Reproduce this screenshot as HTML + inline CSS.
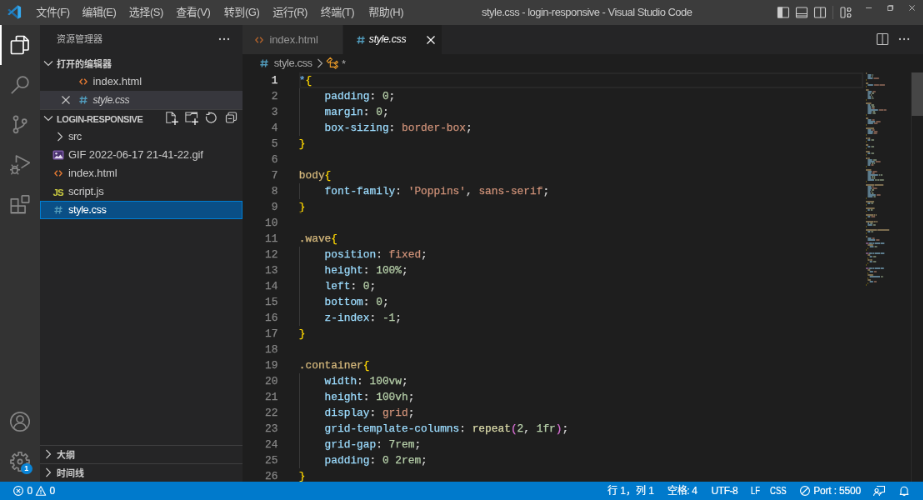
<!DOCTYPE html>
<html lang="zh-CN">
<head>
<meta charset="utf-8">
<title>style.css - login-responsive - Visual Studio Code</title>
<style>
html,body{margin:0;padding:0;background:#1e1e1e;overflow:hidden;}
body{width:923px;height:500px;position:relative;}
#app{position:absolute;left:0;top:0;width:1107.6px;height:600px;transform:scale(0.833333);transform-origin:0 0;will-change:transform;
 font-family:"Liberation Sans","Noto Sans CJK SC",sans-serif;font-size:13px;color:#cccccc;overflow:hidden;background:#1e1e1e;}
#app *{box-sizing:border-box;}
.abs{position:absolute;}
/* title bar */
#title{position:absolute;left:0;top:0;width:100%;height:30px;background:#3c3c3c;color:#cccccc;}
#title .menu{position:absolute;top:0;height:30px;line-height:30px;font-size:13px;white-space:nowrap;letter-spacing:-0.45px;}
#title .wtitle{position:absolute;top:0;height:30px;line-height:30px;font-size:12.6px;white-space:nowrap;color:#cccccc;}
/* activity bar */
#activity{position:absolute;left:0;top:30px;width:48px;height:548px;background:#333333;}
#activity .ic{position:absolute;left:0;width:48px;height:48px;}
#activity .ic svg{position:absolute;left:12px;top:12px;width:24px;height:24px;}
/* sidebar */
#side{position:absolute;left:48px;top:30px;width:243px;height:548px;background:#252526;}
#side .stitle{position:absolute;left:20px;top:0;height:35px;line-height:35px;font-size:11px;color:#bbbbbb;}
.phead{position:absolute;left:0;width:243px;height:22px;line-height:22px;font-size:11px;font-weight:bold;color:#cccccc;}
.phead .lbl{position:absolute;left:20px;top:0.500px;white-space:nowrap;}
.row{position:absolute;left:0;width:243px;height:22px;line-height:22px;font-size:13px;color:#cccccc;white-space:nowrap;}
.row .lbl{position:absolute;top:0;}
/* editor */
#tabs{position:absolute;left:291px;top:30px;width:817px;height:35px;background:#252526;}
.tab{position:absolute;top:0;height:35px;line-height:35px;font-size:13px;white-space:nowrap;}
#crumbs{position:absolute;left:291px;top:65px;width:817px;height:22px;line-height:22px;background:#1e1e1e;font-size:13px;color:#a9a9a9;}
#code{position:absolute;left:291px;top:87px;width:817px;height:491px;background:#1e1e1e;font-family:"Liberation Mono",monospace;font-size:12.83px;-webkit-text-stroke:0.25px;}
.ln{position:absolute;left:0;width:42.5px;text-align:right;height:19px;line-height:19px;color:#858585;}
.cl{position:absolute;left:67.8px;height:19px;line-height:19px;white-space:pre;color:#d4d4d4;}
.p{color:#9cdcfe}.n{color:#b5cea8}.s{color:#ce9178}.y{color:#ffd700}.t{color:#d7ba7d}.f{color:#dcdcaa}.m{color:#da70d6}
/* status */
#status{position:absolute;left:0;top:578px;width:100%;height:22px;background:#007acc;color:#ffffff;font-size:12px;line-height:23px;-webkit-text-stroke:0.2px;}
#status .it{position:absolute;top:0;white-space:nowrap;}
</style>
</head>
<body>
<div id="app">
 <div id="title">
  <svg class="abs" style="left:9.400px;top:6.200px;width:16.600px;height:17.200px" viewBox="0 0 100 100" preserveAspectRatio="none">
   <path d="M74 98L74 78L13 28L3 33L3 37Z" fill="#1a6fae"/>
   <path d="M74 2L74 22L13 72L3 67L3 63Z" fill="#2488cc"/>
   <path d="M74 2L97 14V86L74 98Z" fill="#34a9f0"/>
  </svg>
  <div class="menu" style="left:43.2px">文件(F)</div>
  <div class="menu" style="left:98.4px">编辑(E)</div>
  <div class="menu" style="left:154.8px">选择(S)</div>
  <div class="menu" style="left:211.2px">查看(V)</div>
  <div class="menu" style="left:268.8px">转到(G)</div>
  <div class="menu" style="left:327.200px">运行(R)</div>
  <div class="menu" style="left:384.800px">终端(T)</div>
  <div class="menu" style="left:442.300px">帮助(H)</div>
  <div class="wtitle" style="left:578px;font-size:13px;letter-spacing:-0.52px">style.css - login-responsive - Visual Studio Code</div>
  <svg class="abs" style="left:932px;top:7px;width:16px;height:16px" viewBox="0 0 16 16" fill="none" stroke="#cccccc" stroke-width="1.1"><rect x="1.5" y="2" width="13" height="12" rx="1"/><path d="M1.5 2h5v12h-5z" fill="#cccccc"/></svg>
  <svg class="abs" style="left:954px;top:7px;width:16px;height:16px" viewBox="0 0 16 16" fill="none" stroke="#cccccc" stroke-width="1.1"><rect x="1.5" y="2" width="13" height="12" rx="1"/><path d="M1.5 9.5h13M1.5 12h13"/></svg>
  <svg class="abs" style="left:976px;top:7px;width:16px;height:16px" viewBox="0 0 16 16" fill="none" stroke="#cccccc" stroke-width="1.1"><rect x="1.5" y="2" width="13" height="12" rx="1"/><path d="M8.800 2v12"/></svg>
  <div class="abs" style="left:999px;top:7px;width:1px;height:16px;background:#5a5a5a"></div>
  <svg class="abs" style="left:1007px;top:7px;width:16px;height:16px" viewBox="0 0 16 16" fill="none" stroke="#cccccc" stroke-width="1.1"><rect x="2" y="2" width="5" height="12" rx="1"/><circle cx="12" cy="4.5" r="2"/><circle cx="12" cy="11.5" r="2"/></svg>
  <div class="abs" style="left:1038.500px;top:8.500px;width:7px;height:1px;background:#b0b0b0"></div>
  <svg class="abs" style="left:1064.500px;top:5.800px;width:7px;height:7px" viewBox="0 0 8 8" fill="none" stroke="#c0c0c0" stroke-width="1"><rect x="0.5" y="1.5" width="6" height="6"/><path d="M2 1.5V0.5h5.5V6H6.5"/></svg>
  <svg class="abs" style="left:1091px;top:5.800px;width:7px;height:7px" viewBox="0 0 8 8" fill="none" stroke="#d0d0d0" stroke-width="1"><path d="M0.5 0.5l7 7M7.5 0.5l-7 7"/></svg>
 </div>
 <div id="activity">
  <div class="abs" style="left:0;top:0;width:2px;height:48px;background:#ffffff"></div>
  <div class="ic" style="top:0"><svg viewBox="0 0 24 24" fill="none" stroke="#ffffff" stroke-width="1.700" stroke-linejoin="round"><path d="M7.500 7V2.500a1 1 0 0 1 1-1h8.500l5 5v10.500a1 1 0 0 1-1 1H16"/><path d="M16.800 1.500v5.200h5.200"/><rect x="1.500" y="7" width="14.500" height="15.500" rx="1.200"/></svg></div>
  <div class="ic" style="top:48px"><svg viewBox="0 0 24 24" fill="none" stroke="#858585" stroke-width="1.700"><circle cx="15.300" cy="8.700" r="6.500"/><path d="M10.700 13.300L1.800 22.200"/></svg></div>
  <div class="ic" style="top:96px"><svg viewBox="0 0 24 24" fill="none" stroke="#858585" stroke-width="1.700"><circle cx="7" cy="3.800" r="2.500"/><circle cx="7" cy="18.800" r="2.500"/><circle cx="17.200" cy="7.600" r="2.500"/><path d="M7 6.300v10M17.200 10.100c0 4-4.500 4.200-8.200 6.500"/></svg></div>
  <div class="ic" style="top:144px"><svg viewBox="0 0 24 24" fill="none" stroke="#858585" stroke-width="1.700" stroke-linejoin="round"><path d="M7.500 9V1l16 8.300-10 6.300"/><ellipse cx="5.800" cy="17.800" rx="3.200" ry="4.200"/><path d="M3.600 13.800l-1.800-2.200M8 13.800l1.800-2.200M2.600 17.800H-0.500M9 17.800h3.100M3.400 21l-2 2.200M8.200 21l2 2.200M2.800 16.200h6" stroke-width="1.400"/></svg></div>
  <div class="ic" style="top:192px"><svg viewBox="0 0 24 24" fill="none" stroke="#858585" stroke-width="1.700" stroke-linejoin="round"><path d="M1.300 4.800h8.400v8.400h8.400v8.400H1.300z"/><path d="M1.300 13.200h8.400v8.400"/><rect x="14.300" y="0.800" width="8.400" height="8.400" rx="0.800"/></svg></div>
  <div class="ic" style="top:452px"><svg viewBox="0 0 24 24" fill="none" stroke="#858585" stroke-width="1.700" style="overflow:visible"><circle cx="12" cy="12" r="11.200"/><circle cx="12" cy="9" r="4"/><path d="M4.300 20c1.200-4.300 4.200-6 7.700-6s6.500 1.700 7.700 6"/></svg></div>
  <div class="ic" style="top:500px"><svg viewBox="0 0 24 24" fill="none" stroke="#858585" stroke-width="1.700" stroke-linejoin="round" style="overflow:visible"><circle cx="12" cy="12" r="2.600"/><path d="M10.07 0.97L13.93 0.97L13.91 4.03L16.28 5.01L18.44 2.84L21.16 5.56L18.99 7.72L19.97 10.09L23.03 10.07L23.03 13.93L19.97 13.91L18.99 16.28L21.16 18.44L18.44 21.16L16.28 18.99L13.91 19.97L13.93 23.03L10.07 23.03L10.09 19.97L7.72 18.99L5.56 21.16L2.84 18.44L5.01 16.28L4.03 13.91L0.97 13.93L0.97 10.07L4.03 10.09L5.01 7.72L2.84 5.56L5.56 2.84L7.72 5.01L10.09 4.03Z"/></svg>
   <div class="abs" style="left:25px;top:25.500px;width:13.500px;height:13.500px;border-radius:7px;background:#0a84d6;color:#fff;font-size:9px;font-weight:bold;line-height:13.500px;text-align:center">1</div></div>
 </div>
 <div id="side">
  <div class="stitle">资源管理器</div>
  <svg class="abs" style="left:212.700px;top:9px;width:16px;height:16px" viewBox="0 0 16 16" fill="#cccccc"><circle cx="3" cy="8" r="1.150"/><circle cx="8" cy="8" r="1.150"/><circle cx="13" cy="8" r="1.150"/></svg>
  <div class="phead" style="top:35px"><svg class="abs" style="left:2px;top:3px;width:16px;height:16px" viewBox="0 0 16 16" fill="none" stroke="#cccccc" stroke-width="1.1"><path d="M3 5.500l5 5 5-5"/></svg><span class="lbl">打开的编辑器</span></div>
  <div class="row" style="top:57px"><svg class="abs" style="left:45px;top:3px;width:14px;height:16px" viewBox="0 0 14 16" fill="none" stroke="#e37933" stroke-width="1.500"><path d="M5.800 4.700L2.900 8l2.900 3.300M8.200 4.700L11.100 8l-2.900 3.300" stroke-width="1.400"/></svg><span class="lbl" style="left:63.500px;letter-spacing:-0.06px">index.html</span></div>
  <div class="row" style="top:79px;background:#37373d">
   <svg class="abs" style="left:23px;top:3px;width:16px;height:16px" viewBox="0 0 16 16" fill="none" stroke="#cccccc" stroke-width="1.100"><path d="M3.500 3.500l9 9M12.500 3.500l-9 9"/></svg>
   <svg class="abs" style="left:45px;top:3px;width:14px;height:16px" viewBox="0 0 14 16" fill="none" stroke="#519aba" stroke-width="1.500"><path d="M5.500 3.500L4.300 12.500M9.700 3.500L8.500 12.500M2.700 6.300h9M2.300 9.700h9" stroke-width="1.400"/></svg><span class="lbl" style="left:63.500px;font-style:italic;font-size:12.300px;letter-spacing:-0.380px">style.css</span></div>
  <div class="abs" style="left:0;top:101px;width:243px;height:1px;background:#3f3f40"></div>
  <div class="phead" style="top:101px"><svg class="abs" style="left:2px;top:3px;width:16px;height:16px" viewBox="0 0 16 16" fill="none" stroke="#cccccc" stroke-width="1.1"><path d="M3 5.500l5 5 5-5"/></svg><span class="lbl" style="letter-spacing:-0.41px">LOGIN-RESPONSIVE</span>
   <svg class="abs" style="left:150px;top:3px;width:16px;height:16px" viewBox="0 0 16 16" fill="none" stroke="#c5c5c5" stroke-width="1.100"><path d="M7.500 13.200H1.800V0.800h6.700l3.700 3.700v3M8.300 0.800v3.900h3.900"/><path d="M12 8.300v7.800M8.100 12.200h7.800" stroke="#e8e8e8" stroke-width="1.400"/></svg>
   <svg class="abs" style="left:174px;top:3px;width:16px;height:16px" viewBox="0 0 16 16" fill="none" stroke="#c5c5c5" stroke-width="1.100"><path d="M7.500 12H0.900V1h13.600v6.800M0.900 4h5.600l1.300-1.600h6.500"/><path d="M7.800 1h6.700v2H7.800z" fill="#c5c5c5" stroke="none"/><path d="M12 8.300v7.800M8.100 12.200h7.800" stroke="#e8e8e8" stroke-width="1.400"/></svg>
   <svg class="abs" style="left:198px;top:3px;width:16px;height:16px" viewBox="0 0 16 16" fill="none" stroke="#c5c5c5" stroke-width="1.100"><path d="M4.300 2.400A5.800 5.800 0 1 1 1.800 5.600" stroke-width="1.300"/><path d="M4.800 0.200v3.200H1.400" stroke-width="1.300"/></svg>
   <svg class="abs" style="left:222px;top:3px;width:16px;height:16px" viewBox="0 0 16 16" fill="none" stroke="#c5c5c5" stroke-width="1.100"><rect x="1.500" y="4" width="9" height="9" rx="1.500" stroke-width="1.200"/><path d="M4 4V2.500a1.500 1.500 0 0 1 1.500-1.500h6.500a1.500 1.500 0 0 1 1.500 1.500v6.500a1.500 1.500 0 0 1-1.500 1.500h-1.500M3.700 8.500h4.600" stroke-width="1.200"/></svg>
  </div>
  <div class="row" style="top:123px"><svg class="abs" style="left:16px;top:3px;width:16px;height:16px" viewBox="0 0 16 16" fill="none" stroke="#cccccc" stroke-width="1.1"><path d="M5.500 3l5 5-5 5"/></svg><span class="lbl" style="left:34px;letter-spacing:-0.6px">src</span></div>
  <div class="row" style="top:145px">
   <svg class="abs" style="left:15px;top:4px;width:14px;height:14px" viewBox="0 0 14 14"><rect x="0.500" y="1.500" width="13" height="11" rx="1.500" fill="#7d5aa8"/><rect x="2" y="3" width="10" height="8" fill="#49326e"/><circle cx="4.500" cy="5.300" r="1.200" fill="#e6dcf0"/><path d="M2 11l3.200-3.200 1.800 1.800 2.500-3 2.500 3.400v1z" fill="#e6dcf0"/></svg>
   <span class="lbl" style="left:34px;letter-spacing:-0.107px">GIF 2022-06-17 21-41-22.gif</span></div>
  <div class="row" style="top:167px"><svg class="abs" style="left:15px;top:3px;width:14px;height:16px" viewBox="0 0 14 16" fill="none" stroke="#e37933" stroke-width="1.500"><path d="M5.800 4.700L2.900 8l2.900 3.300M8.200 4.700L11.100 8l-2.900 3.300" stroke-width="1.400"/></svg><span class="lbl" style="left:34px;letter-spacing:-0.06px">index.html</span></div>
  <div class="row" style="top:189px"><span class="abs" style="left:15.500px;top:0.500px;font-size:11.500px;font-weight:bold;color:#cbcb41;letter-spacing:-1px">JS</span><span class="lbl" style="left:34px;letter-spacing:-0.17px">script.js</span></div>
  <div class="row" style="top:210.500px;height:22.500px;background:#0a4f86;border:1px solid #007fd4;color:#ffffff"><svg class="abs" style="left:14px;top:2px;width:14px;height:16px" viewBox="0 0 14 16" fill="none" stroke="#519aba" stroke-width="1.500"><path d="M5.500 3.500L4.300 12.500M9.700 3.500L8.500 12.500M2.700 6.300h9M2.300 9.700h9" stroke-width="1.400"/></svg><span class="lbl" style="left:33px;top:-1px;letter-spacing:-0.49px">style.css</span></div>
  <div class="abs" style="left:0;top:504px;width:243px;height:1px;background:#3f3f40"></div>
  <div class="phead" style="top:504px"><svg class="abs" style="left:2px;top:3px;width:16px;height:16px" viewBox="0 0 16 16" fill="none" stroke="#cccccc" stroke-width="1.1"><path d="M5.500 3l5 5-5 5"/></svg><span class="lbl">大纲</span></div>
  <div class="abs" style="left:0;top:526px;width:243px;height:1px;background:#3f3f40"></div>
  <div class="phead" style="top:526px"><svg class="abs" style="left:2px;top:3px;width:16px;height:16px" viewBox="0 0 16 16" fill="none" stroke="#cccccc" stroke-width="1.1"><path d="M5.500 3l5 5-5 5"/></svg><span class="lbl">时间线</span></div>
 </div>
 <div id="tabs">
  <div class="tab" style="left:0;width:120px;background:#2d2d2d;color:#969696">
   <svg class="abs" style="left:13px;top:9.500px;width:14px;height:16px" viewBox="0 0 14 16" fill="none" stroke="#b0622c" stroke-width="1.500"><path d="M5.800 4.700L2.900 8l2.900 3.300M8.200 4.700L11.100 8l-2.900 3.300" stroke-width="1.400"/></svg>
   <span class="abs" style="left:32.400px;top:0;letter-spacing:-0.07px">index.html</span></div>
  <div class="tab" style="left:121px;width:117.500px;background:#1e1e1e;color:#ffffff">
   <svg class="abs" style="left:14px;top:9.500px;width:14px;height:16px" viewBox="0 0 14 16" fill="none" stroke="#519aba" stroke-width="1.500"><path d="M5.500 3.500L4.300 12.500M9.700 3.500L8.500 12.500M2.700 6.300h9M2.300 9.700h9" stroke-width="1.400"/></svg>
   <span class="abs" style="left:30.800px;top:0;font-style:italic;font-size:12.300px;letter-spacing:-0.300px">style.css</span>
   <svg class="abs" style="left:97px;top:9.500px;width:16px;height:16px" viewBox="0 0 16 16" fill="none" stroke="#ffffff" stroke-width="1.200"><path d="M3.500 3.500l9 9M12.500 3.500l-9 9"/></svg></div>
  <svg class="abs" style="left:760px;top:9px;width:16px;height:16px" viewBox="0 0 16 16" fill="none" stroke="#c5c5c5" stroke-width="1.100"><rect x="1.500" y="1.500" width="13" height="13" rx="1"/><path d="M8 1.500v13"/></svg>
  <svg class="abs" style="left:785.9px;top:8.8px;width:16px;height:16px" viewBox="0 0 16 16" fill="#c5c5c5"><circle cx="3" cy="8" r="1.150"/><circle cx="8" cy="8" r="1.150"/><circle cx="13" cy="8" r="1.150"/></svg>
 </div>
 <div id="crumbs">
  <svg class="abs" style="left:19px;top:3px;width:14px;height:16px" viewBox="0 0 14 16" fill="none" stroke="#519aba" stroke-width="1.500"><path d="M5.500 3.500L4.300 12.500M9.700 3.500L8.500 12.500M2.700 6.300h9M2.300 9.700h9" stroke-width="1.400"/></svg>
  <span class="abs" style="left:37.800px;top:0;letter-spacing:-0.44px">style.css</span>
  <svg class="abs" style="left:85px;top:3px;width:16px;height:16px" viewBox="0 0 16 16" fill="none" stroke="#a9a9a9" stroke-width="1.100"><path d="M5.500 3l5 5-5 5"/></svg>
  <svg class="abs" style="left:100px;top:3px;width:16px;height:16px" viewBox="0 0 16 16" fill="none" stroke="#ee9d28" stroke-width="1.100"><path d="M5.350 1.300L7.400 3.350L3.350 7.400L1.300 5.350ZM13 5.400L14.300 6.700L11.700 9.300L10.400 8ZM13 10.400L14.300 11.700L11.700 14.300L10.400 13ZM5.350 6v6.350h5.300M5.350 7.300h5.300"/></svg>
  <span class="abs" style="left:119px;top:1px">*</span>
 </div>
 <div id="code">
  <div class="abs" style="left:67.800px;top:0;width:677.500px;height:19px;border:2px solid #282828"></div>
  <div class="abs" style="left:67.800px;top:19px;width:1px;height:57px;background:#393939"></div>
  <div class="abs" style="left:67.800px;top:133px;width:1px;height:19px;background:#393939"></div>
  <div class="abs" style="left:67.800px;top:209px;width:1px;height:95px;background:#393939"></div>
  <div class="abs" style="left:67.800px;top:361px;width:1px;height:114px;background:#393939"></div>
  <div class="ln" style="top:0px"><span style="color:#e4e4e4">1</span></div><div class="cl" style="top:0px"><span style="color:#6cb0e8">*</span><span class="y">{</span></div>
  <div class="ln" style="top:19px"><span>2</span></div><div class="cl" style="top:19px">    <span class="p">padding</span>: <span class="n">0</span>;</div>
  <div class="ln" style="top:38px"><span>3</span></div><div class="cl" style="top:38px">    <span class="p">margin</span>: <span class="n">0</span>;</div>
  <div class="ln" style="top:57px"><span>4</span></div><div class="cl" style="top:57px">    <span class="p">box-sizing</span>: <span class="s">border-box</span>;</div>
  <div class="ln" style="top:76px"><span>5</span></div><div class="cl" style="top:76px"><span class="y">}</span></div>
  <div class="ln" style="top:95px"><span>6</span></div><div class="cl" style="top:95px"></div>
  <div class="ln" style="top:114px"><span>7</span></div><div class="cl" style="top:114px"><span class="t">body</span><span class="y">{</span></div>
  <div class="ln" style="top:133px"><span>8</span></div><div class="cl" style="top:133px">    <span class="p">font-family</span>: <span class="s">'Poppins'</span>, <span class="s">sans-serif</span>;</div>
  <div class="ln" style="top:152px"><span>9</span></div><div class="cl" style="top:152px"><span class="y">}</span></div>
  <div class="ln" style="top:171px"><span>10</span></div><div class="cl" style="top:171px"></div>
  <div class="ln" style="top:190px"><span>11</span></div><div class="cl" style="top:190px"><span class="t">.wave</span><span class="y">{</span></div>
  <div class="ln" style="top:209px"><span>12</span></div><div class="cl" style="top:209px">    <span class="p">position</span>: <span class="s">fixed</span>;</div>
  <div class="ln" style="top:228px"><span>13</span></div><div class="cl" style="top:228px">    <span class="p">height</span>: <span class="n">100%</span>;</div>
  <div class="ln" style="top:247px"><span>14</span></div><div class="cl" style="top:247px">    <span class="p">left</span>: <span class="n">0</span>;</div>
  <div class="ln" style="top:266px"><span>15</span></div><div class="cl" style="top:266px">    <span class="p">bottom</span>: <span class="n">0</span>;</div>
  <div class="ln" style="top:285px"><span>16</span></div><div class="cl" style="top:285px">    <span class="p">z-index</span>: <span class="n">-1</span>;</div>
  <div class="ln" style="top:304px"><span>17</span></div><div class="cl" style="top:304px"><span class="y">}</span></div>
  <div class="ln" style="top:323px"><span>18</span></div><div class="cl" style="top:323px"></div>
  <div class="ln" style="top:342px"><span>19</span></div><div class="cl" style="top:342px"><span class="t">.container</span><span class="y">{</span></div>
  <div class="ln" style="top:361px"><span>20</span></div><div class="cl" style="top:361px">    <span class="p">width</span>: <span class="n">100vw</span>;</div>
  <div class="ln" style="top:380px"><span>21</span></div><div class="cl" style="top:380px">    <span class="p">height</span>: <span class="n">100vh</span>;</div>
  <div class="ln" style="top:399px"><span>22</span></div><div class="cl" style="top:399px">    <span class="p">display</span>: <span class="s">grid</span>;</div>
  <div class="ln" style="top:418px"><span>23</span></div><div class="cl" style="top:418px">    <span class="p">grid-template-columns</span>: <span class="f">repeat</span><span class="m">(</span><span class="n">2</span>, <span class="n">1fr</span><span class="m">)</span>;</div>
  <div class="ln" style="top:437px"><span>24</span></div><div class="cl" style="top:437px">    <span class="p">grid-gap</span>: <span class="n">7rem</span>;</div>
  <div class="ln" style="top:456px"><span>25</span></div><div class="cl" style="top:456px">    <span class="p">padding</span>: <span class="n">0</span> <span class="n">2rem</span>;</div>
  <div class="ln" style="top:475px"><span>26</span></div><div class="cl" style="top:475px"><span class="y">}</span></div>
  <div class="abs" style="left:801.500px;top:0;width:1px;height:491px;background:#2b2b2b"></div>
  <div class="abs" style="left:802.500px;top:0;width:14.500px;height:51.600px;background:#464646"></div>
  <svg class="abs" style="left:748px;top:0;width:54px;height:256px" viewBox="0 0 92 256" preserveAspectRatio="none" fill-opacity="0.5"><rect x="0" y="0" width="2" height="2" fill="#d7ba7d"/><rect x="4" y="2" width="7" height="2" fill="#9cdcfe"/><rect x="13" y="2" width="2" height="2" fill="#b5cea8"/><rect x="4" y="4" width="6" height="2" fill="#9cdcfe"/><rect x="12" y="4" width="2" height="2" fill="#b5cea8"/><rect x="4" y="6" width="10" height="2" fill="#9cdcfe"/><rect x="16" y="6" width="11" height="2" fill="#ce9178"/><rect x="0" y="8" width="1" height="2" fill="#ffd700"/><rect x="0" y="12" width="5" height="2" fill="#d7ba7d"/><rect x="4" y="14" width="11" height="2" fill="#9cdcfe"/><rect x="17" y="14" width="10" height="2" fill="#ce9178"/><rect x="28" y="14" width="11" height="2" fill="#ce9178"/><rect x="0" y="16" width="1" height="2" fill="#ffd700"/><rect x="0" y="20" width="6" height="2" fill="#d7ba7d"/><rect x="4" y="22" width="8" height="2" fill="#9cdcfe"/><rect x="14" y="22" width="6" height="2" fill="#ce9178"/><rect x="4" y="24" width="6" height="2" fill="#9cdcfe"/><rect x="12" y="24" width="5" height="2" fill="#b5cea8"/><rect x="4" y="26" width="4" height="2" fill="#9cdcfe"/><rect x="10" y="26" width="2" height="2" fill="#b5cea8"/><rect x="4" y="28" width="6" height="2" fill="#9cdcfe"/><rect x="12" y="28" width="2" height="2" fill="#b5cea8"/><rect x="4" y="30" width="7" height="2" fill="#9cdcfe"/><rect x="13" y="30" width="3" height="2" fill="#b5cea8"/><rect x="0" y="32" width="1" height="2" fill="#ffd700"/><rect x="0" y="36" width="11" height="2" fill="#d7ba7d"/><rect x="4" y="38" width="5" height="2" fill="#9cdcfe"/><rect x="11" y="38" width="6" height="2" fill="#b5cea8"/><rect x="4" y="40" width="6" height="2" fill="#9cdcfe"/><rect x="12" y="40" width="6" height="2" fill="#b5cea8"/><rect x="4" y="42" width="7" height="2" fill="#9cdcfe"/><rect x="13" y="42" width="5" height="2" fill="#ce9178"/><rect x="4" y="44" width="21" height="2" fill="#9cdcfe"/><rect x="27" y="44" width="9" height="2" fill="#ce9178"/><rect x="37" y="44" width="5" height="2" fill="#ce9178"/><rect x="4" y="46" width="8" height="2" fill="#9cdcfe"/><rect x="14" y="46" width="5" height="2" fill="#b5cea8"/><rect x="4" y="48" width="7" height="2" fill="#9cdcfe"/><rect x="13" y="48" width="1" height="2" fill="#b5cea8"/><rect x="15" y="48" width="5" height="2" fill="#b5cea8"/><rect x="0" y="50" width="1" height="2" fill="#ffd700"/><rect x="0" y="54" width="5" height="2" fill="#d7ba7d"/><rect x="4" y="56" width="7" height="2" fill="#9cdcfe"/><rect x="13" y="56" width="5" height="2" fill="#ce9178"/><rect x="4" y="58" width="15" height="2" fill="#9cdcfe"/><rect x="21" y="58" width="9" height="2" fill="#ce9178"/><rect x="4" y="60" width="11" height="2" fill="#9cdcfe"/><rect x="17" y="60" width="7" height="2" fill="#ce9178"/><rect x="0" y="62" width="1" height="2" fill="#ffd700"/><rect x="0" y="66" width="17" height="2" fill="#d7ba7d"/><rect x="4" y="68" width="7" height="2" fill="#9cdcfe"/><rect x="13" y="68" width="5" height="2" fill="#ce9178"/><rect x="4" y="70" width="11" height="2" fill="#9cdcfe"/><rect x="17" y="70" width="7" height="2" fill="#ce9178"/><rect x="4" y="72" width="10" height="2" fill="#9cdcfe"/><rect x="16" y="72" width="7" height="2" fill="#ce9178"/><rect x="0" y="74" width="1" height="2" fill="#ffd700"/><rect x="0" y="78" width="4" height="2" fill="#d7ba7d"/><rect x="5" y="78" width="4" height="2" fill="#d7ba7d"/><rect x="4" y="80" width="5" height="2" fill="#9cdcfe"/><rect x="11" y="80" width="6" height="2" fill="#b5cea8"/><rect x="0" y="82" width="1" height="2" fill="#ffd700"/><rect x="0" y="86" width="5" height="2" fill="#d7ba7d"/><rect x="4" y="88" width="5" height="2" fill="#9cdcfe"/><rect x="11" y="88" width="6" height="2" fill="#b5cea8"/><rect x="0" y="90" width="1" height="2" fill="#ffd700"/><rect x="0" y="94" width="8" height="2" fill="#d7ba7d"/><rect x="4" y="96" width="5" height="2" fill="#9cdcfe"/><rect x="11" y="96" width="6" height="2" fill="#b5cea8"/><rect x="0" y="98" width="1" height="2" fill="#ffd700"/><rect x="0" y="102" width="4" height="2" fill="#d7ba7d"/><rect x="5" y="102" width="3" height="2" fill="#d7ba7d"/><rect x="4" y="104" width="9" height="2" fill="#9cdcfe"/><rect x="15" y="104" width="7" height="2" fill="#b5cea8"/><rect x="4" y="106" width="14" height="2" fill="#9cdcfe"/><rect x="20" y="106" width="10" height="2" fill="#ce9178"/><rect x="4" y="108" width="6" height="2" fill="#9cdcfe"/><rect x="12" y="108" width="4" height="2" fill="#b5cea8"/><rect x="17" y="108" width="2" height="2" fill="#b5cea8"/><rect x="4" y="110" width="5" height="2" fill="#9cdcfe"/><rect x="11" y="110" width="5" height="2" fill="#ce9178"/><rect x="0" y="112" width="1" height="2" fill="#ffd700"/><rect x="0" y="116" width="11" height="2" fill="#d7ba7d"/><rect x="4" y="118" width="8" height="2" fill="#9cdcfe"/><rect x="14" y="118" width="9" height="2" fill="#ce9178"/><rect x="4" y="120" width="7" height="2" fill="#9cdcfe"/><rect x="13" y="120" width="5" height="2" fill="#ce9178"/><rect x="4" y="122" width="21" height="2" fill="#9cdcfe"/><rect x="27" y="122" width="2" height="2" fill="#b5cea8"/><rect x="30" y="122" width="4" height="2" fill="#b5cea8"/><rect x="4" y="124" width="6" height="2" fill="#9cdcfe"/><rect x="12" y="124" width="4" height="2" fill="#b5cea8"/><rect x="17" y="124" width="2" height="2" fill="#b5cea8"/><rect x="4" y="126" width="7" height="2" fill="#9cdcfe"/><rect x="13" y="126" width="3" height="2" fill="#b5cea8"/><rect x="17" y="126" width="2" height="2" fill="#b5cea8"/><rect x="4" y="128" width="13" height="2" fill="#9cdcfe"/><rect x="19" y="128" width="3" height="2" fill="#b5cea8"/><rect x="23" y="128" width="5" height="2" fill="#b5cea8"/><rect x="29" y="128" width="8" height="2" fill="#b5cea8"/><rect x="0" y="130" width="1" height="2" fill="#ffd700"/><rect x="0" y="134" width="17" height="2" fill="#d7ba7d"/><rect x="18" y="134" width="18" height="2" fill="#d7ba7d"/><rect x="4" y="136" width="7" height="2" fill="#9cdcfe"/><rect x="13" y="136" width="3" height="2" fill="#ce9178"/><rect x="4" y="138" width="8" height="2" fill="#9cdcfe"/><rect x="14" y="138" width="9" height="2" fill="#ce9178"/><rect x="4" y="140" width="6" height="2" fill="#9cdcfe"/><rect x="12" y="140" width="5" height="2" fill="#b5cea8"/><rect x="4" y="142" width="5" height="2" fill="#9cdcfe"/><rect x="11" y="142" width="2" height="2" fill="#b5cea8"/><rect x="4" y="144" width="6" height="2" fill="#9cdcfe"/><rect x="12" y="144" width="4" height="2" fill="#b5cea8"/><rect x="4" y="146" width="16" height="2" fill="#9cdcfe"/><rect x="22" y="146" width="8" height="2" fill="#ce9178"/><rect x="4" y="148" width="10" height="2" fill="#9cdcfe"/><rect x="16" y="148" width="4" height="2" fill="#b5cea8"/><rect x="0" y="150" width="1" height="2" fill="#ffd700"/><rect x="0" y="154" width="17" height="2" fill="#d7ba7d"/><rect x="4" y="156" width="5" height="2" fill="#9cdcfe"/><rect x="11" y="156" width="4" height="2" fill="#b5cea8"/><rect x="0" y="158" width="1" height="2" fill="#ffd700"/><rect x="0" y="162" width="18" height="2" fill="#d7ba7d"/><rect x="4" y="164" width="4" height="2" fill="#9cdcfe"/><rect x="10" y="164" width="4" height="2" fill="#b5cea8"/><rect x="0" y="166" width="1" height="2" fill="#ffd700"/><rect x="0" y="170" width="16" height="2" fill="#d7ba7d"/><rect x="17" y="170" width="2" height="2" fill="#d7ba7d"/><rect x="20" y="170" width="2" height="2" fill="#d7ba7d"/><rect x="4" y="172" width="5" height="2" fill="#9cdcfe"/><rect x="11" y="172" width="8" height="2" fill="#ce9178"/><rect x="0" y="174" width="1" height="2" fill="#ffd700"/><rect x="0" y="178" width="16" height="2" fill="#d7ba7d"/><rect x="17" y="178" width="3" height="2" fill="#d7ba7d"/><rect x="21" y="178" width="3" height="2" fill="#d7ba7d"/><rect x="4" y="180" width="3" height="2" fill="#9cdcfe"/><rect x="9" y="180" width="5" height="2" fill="#b5cea8"/><rect x="4" y="182" width="9" height="2" fill="#9cdcfe"/><rect x="15" y="182" width="5" height="2" fill="#b5cea8"/><rect x="0" y="184" width="1" height="2" fill="#ffd700"/><rect x="0" y="188" width="23" height="2" fill="#d7ba7d"/><rect x="24" y="188" width="24" height="2" fill="#d7ba7d"/><rect x="4" y="190" width="5" height="2" fill="#9cdcfe"/><rect x="11" y="190" width="4" height="2" fill="#b5cea8"/><rect x="0" y="192" width="1" height="2" fill="#ffd700"/><rect x="0" y="196" width="3" height="2" fill="#d7ba7d"/><rect x="4" y="198" width="7" height="2" fill="#9cdcfe"/><rect x="13" y="198" width="5" height="2" fill="#ce9178"/><rect x="4" y="200" width="15" height="2" fill="#9cdcfe"/><rect x="21" y="200" width="7" height="2" fill="#ce9178"/><rect x="0" y="204" width="6" height="2" fill="#c586c0"/><rect x="7" y="204" width="6" height="2" fill="#9cdcfe"/><rect x="14" y="204" width="3" height="2" fill="#9cdcfe"/><rect x="18" y="204" width="11" height="2" fill="#9cdcfe"/><rect x="30" y="204" width="8" height="2" fill="#9cdcfe"/><rect x="4" y="206" width="11" height="2" fill="#d7ba7d"/><rect x="8" y="208" width="8" height="2" fill="#9cdcfe"/><rect x="18" y="208" width="5" height="2" fill="#b5cea8"/><rect x="4" y="210" width="1" height="2" fill="#ffd700"/><rect x="0" y="212" width="1" height="2" fill="#ffd700"/><rect x="0" y="216" width="6" height="2" fill="#c586c0"/><rect x="7" y="216" width="6" height="2" fill="#9cdcfe"/><rect x="14" y="216" width="3" height="2" fill="#9cdcfe"/><rect x="18" y="216" width="11" height="2" fill="#9cdcfe"/><rect x="30" y="216" width="8" height="2" fill="#9cdcfe"/><rect x="4" y="218" width="5" height="2" fill="#d7ba7d"/><rect x="8" y="220" width="5" height="2" fill="#9cdcfe"/><rect x="15" y="220" width="6" height="2" fill="#b5cea8"/><rect x="4" y="222" width="1" height="2" fill="#ffd700"/><rect x="4" y="224" width="4" height="2" fill="#d7ba7d"/><rect x="9" y="224" width="4" height="2" fill="#d7ba7d"/><rect x="8" y="226" width="5" height="2" fill="#9cdcfe"/><rect x="15" y="226" width="6" height="2" fill="#b5cea8"/><rect x="4" y="228" width="1" height="2" fill="#ffd700"/><rect x="0" y="230" width="1" height="2" fill="#ffd700"/><rect x="0" y="234" width="6" height="2" fill="#c586c0"/><rect x="7" y="234" width="6" height="2" fill="#9cdcfe"/><rect x="14" y="234" width="3" height="2" fill="#9cdcfe"/><rect x="18" y="234" width="11" height="2" fill="#9cdcfe"/><rect x="30" y="234" width="7" height="2" fill="#9cdcfe"/><rect x="4" y="236" width="5" height="2" fill="#d7ba7d"/><rect x="8" y="238" width="7" height="2" fill="#9cdcfe"/><rect x="17" y="238" width="5" height="2" fill="#ce9178"/><rect x="4" y="240" width="1" height="2" fill="#ffd700"/><rect x="4" y="242" width="11" height="2" fill="#d7ba7d"/><rect x="8" y="244" width="21" height="2" fill="#9cdcfe"/><rect x="31" y="244" width="4" height="2" fill="#b5cea8"/><rect x="4" y="246" width="1" height="2" fill="#ffd700"/><rect x="4" y="248" width="6" height="2" fill="#d7ba7d"/><rect x="8" y="250" width="7" height="2" fill="#9cdcfe"/><rect x="17" y="250" width="5" height="2" fill="#ce9178"/><rect x="4" y="252" width="1" height="2" fill="#ffd700"/><rect x="0" y="254" width="1" height="2" fill="#ffd700"/></svg>
 </div>
 <div id="status">
  <svg class="abs" style="left:14.800px;top:4.300px;width:14px;height:14px" viewBox="0 0 16 16" fill="none" stroke="#ffffff" stroke-width="1.300"><circle cx="8" cy="8" r="6.200"/><path d="M5.500 5.500l5 5M10.500 5.500l-5 5"/></svg>
  <span class="it" style="left:32.400px">0</span>
  <svg class="abs" style="left:42.100px;top:3.800px;width:14px;height:14px" viewBox="0 0 16 16" fill="none" stroke="#ffffff" stroke-width="1.300" stroke-linejoin="round"><path d="M8 2L14.500 14h-13z"/><path d="M8 6.500v4M8 11.500v1.200"/></svg>
  <span class="it" style="left:59.500px">0</span>
  <span class="it" style="left:729px">行 1，列 1</span>
  <span class="it" style="left:801px;letter-spacing:-0.33px">空格: 4</span>
  <span class="it" style="left:853.600px;letter-spacing:-0.48px">UTF-8</span>
  <span class="it" style="left:901.400px;transform:scaleX(0.78);transform-origin:0 50%">LF</span>
  <span class="it" style="left:923.800px;transform:scaleX(0.8);transform-origin:0 50%">CSS</span>
  <svg class="abs" style="left:959.200px;top:4.300px;width:14px;height:14px" viewBox="0 0 16 16" fill="none" stroke="#ffffff" stroke-width="1.300"><circle cx="8" cy="8" r="6.200"/><path d="M3.700 12.300l8.600-8.600"/></svg>
  <span class="it" style="left:976.200px;letter-spacing:-0.17px">Port : 5500</span>
  <svg class="abs" style="left:1047px;top:3px;width:16px;height:16px" viewBox="0 0 16 16" fill="none" stroke="#ffffff" stroke-width="1.100" stroke-linejoin="round"><path d="M5 2.500h9.500v7h-3l-2.500 2.500v-2.500"/><circle cx="5" cy="7.500" r="2"/><path d="M1.500 14c.300-2.500 1.800-3.500 3.500-3.500s3.200 1 3.500 3.500"/></svg>
  <svg class="abs" style="left:1078.300px;top:4px;width:14px;height:14px" viewBox="0 0 16 16" fill="none" stroke="#ffffff" stroke-width="1.250" stroke-linejoin="round"><path d="M3.500 11.500V7a4.500 4.500 0 0 1 9 0v4.500l1 1.500h-11zM6.500 13a1.500 1.500 0 0 0 3 0"/></svg>
 </div>
</div>
</body>
</html>
